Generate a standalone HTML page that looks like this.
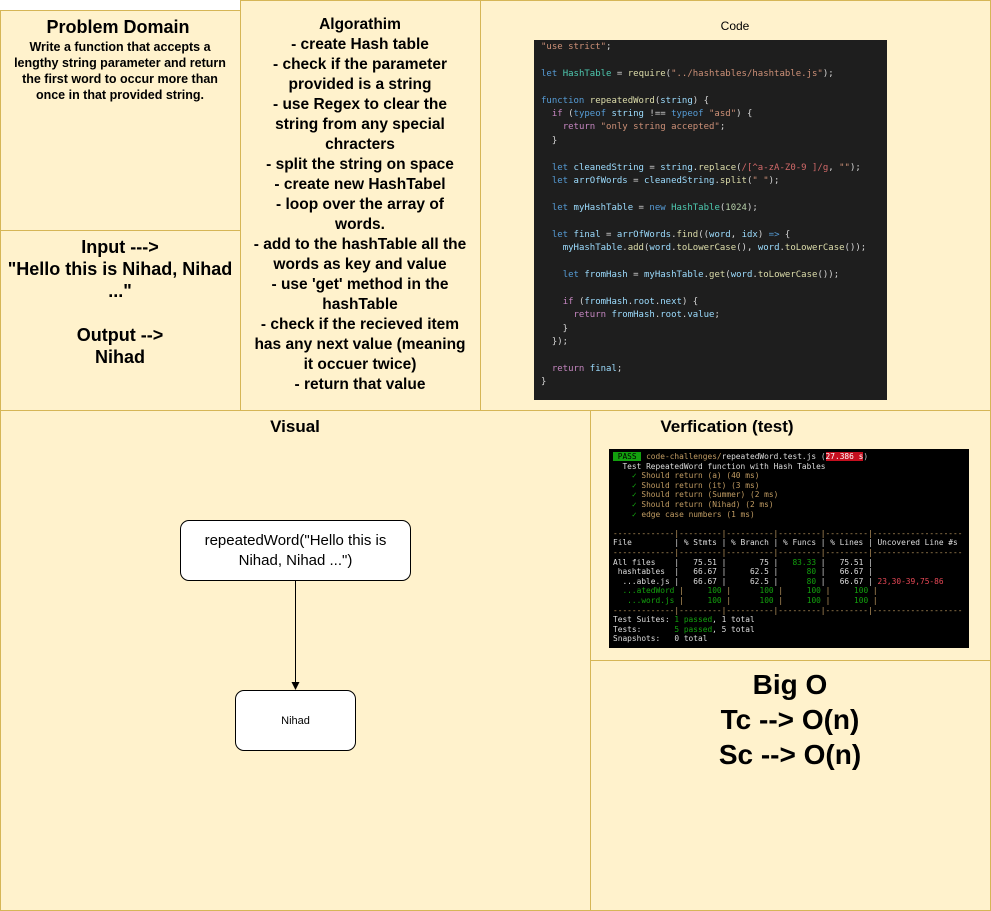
<!DOCTYPE html>
<html><head><meta charset="utf-8"><style>
body{margin:0;width:991px;height:911px;background:#fff;position:relative;font-family:"Liberation Sans",Arial,sans-serif;overflow:hidden}
.b{position:absolute;background:#fff2cc;border:1px solid #d6b656;box-sizing:border-box}
.t{position:absolute;text-align:center;font-weight:bold;color:#000}
.code{position:absolute;left:534px;top:40px;width:353px;height:360px;background:#1e1e1e;color:#d4d4d4;font-family:"DejaVu Sans Mono","Liberation Mono",monospace;font-size:9px;line-height:13.4px;padding:1px 0 0 7px;box-sizing:border-box;white-space:pre;overflow:hidden}
.k{color:#569cd6}.s{color:#ce9178}.f{color:#dcdcaa}.v{color:#9cdcfe}.c{color:#4ec9b0}.p{color:#c586c0}.n{color:#b5cea8}.r{color:#d16969}
.term{position:absolute;left:609px;top:449px;width:360px;height:199px;background:#000;color:#ccc;font-family:"DejaVu Sans Mono","Liberation Mono",monospace;font-size:7.85px;line-height:9.6px;padding:3px 0 0 4px;box-sizing:border-box;white-space:pre;overflow:hidden}
.g{color:#13a10e}.y{color:#c19c63}.w{color:#ddd}.rd{color:#e74856}
.box{position:absolute;background:#fff;border:1px solid #000;border-radius:9px;box-sizing:border-box;display:flex;align-items:center;justify-content:center;text-align:center}
</style></head><body>
<div class="b" style="left:0;top:10px;width:241px;height:221px"></div>
<div class="b" style="left:0;top:230px;width:241px;height:181px"></div>
<div class="b" style="left:240px;top:0;width:241px;height:411px"></div>
<div class="b" style="left:480px;top:0;width:511px;height:411px"></div>
<div class="b" style="left:0;top:410px;width:591px;height:501px"></div>
<div class="b" style="left:590px;top:410px;width:401px;height:251px"></div>
<div class="b" style="left:590px;top:660px;width:401px;height:251px"></div>

<div class="t" style="left:0;top:16px;width:236px;font-size:18px;line-height:22px">Problem Domain</div>
<div class="t" style="left:0;top:39px;width:240px;font-size:12.5px;line-height:16px">Write a function that accepts a<br>lengthy string parameter and return<br>the first word to occur more than<br>once in that provided string.</div>

<div class="t" style="left:0;top:236px;width:240px;font-size:18px;line-height:22px">Input ---&gt;<br>"Hello this is Nihad, Nihad<br>..."<br><br>Output --&gt;<br>Nihad</div>

<div class="t" style="left:240px;top:15px;width:240px;font-size:15.5px;line-height:20px">Algorathim<br>- create Hash table<br>- check if the parameter<br>provided is a string<br>- use Regex to clear the<br>string from any special<br>chracters<br>- split the string on space<br>- create new HashTabel<br>- loop over the array of<br>words.<br>- add to the hashTable all the<br>words as key and value<br>- use 'get' method in the<br>hashTable<br>- check if the recieved item<br>has any next value (meaning<br>it occuer twice)<br>- return that value</div>

<div style="position:absolute;left:480px;top:19px;width:510px;text-align:center;font-size:12px">Code</div>
<div class="code"><span class="s">"use strict"</span>;

<span class="k">let</span> <span class="c">HashTable</span> = <span class="f">require</span>(<span class="s">"../hashtables/hashtable.js"</span>);

<span class="k">function</span> <span class="f">repeatedWord</span>(<span class="v">string</span>) {
  <span class="p">if</span> (<span class="k">typeof</span> <span class="v">string</span> !== <span class="k">typeof</span> <span class="s">"asd"</span>) {
    <span class="p">return</span> <span class="s">"only string accepted"</span>;
  }

  <span class="k">let</span> <span class="v">cleanedString</span> = <span class="v">string</span>.<span class="f">replace</span>(<span class="r">/[^a-zA-Z0-9 ]/g</span>, <span class="s">""</span>);
  <span class="k">let</span> <span class="v">arrOfWords</span> = <span class="v">cleanedString</span>.<span class="f">split</span>(<span class="s">" "</span>);

  <span class="k">let</span> <span class="v">myHashTable</span> = <span class="k">new</span> <span class="c">HashTable</span>(<span class="n">1024</span>);

  <span class="k">let</span> <span class="v">final</span> = <span class="v">arrOfWords</span>.<span class="f">find</span>((<span class="v">word</span>, <span class="v">idx</span>) <span class="k">=&gt;</span> {
    <span class="v">myHashTable</span>.<span class="f">add</span>(<span class="v">word</span>.<span class="f">toLowerCase</span>(), <span class="v">word</span>.<span class="f">toLowerCase</span>());

    <span class="k">let</span> <span class="v">fromHash</span> = <span class="v">myHashTable</span>.<span class="f">get</span>(<span class="v">word</span>.<span class="f">toLowerCase</span>());

    <span class="p">if</span> (<span class="v">fromHash</span>.<span class="v">root</span>.<span class="v">next</span>) {
      <span class="p">return</span> <span class="v">fromHash</span>.<span class="v">root</span>.<span class="v">value</span>;
    }
  });

  <span class="p">return</span> <span class="v">final</span>;
}</div>

<div class="t" style="left:0;top:417px;width:590px;font-size:17px">Visual</div>
<div class="box" style="left:180px;top:520px;width:231px;height:61px;font-size:15px;line-height:20px">repeatedWord("Hello this is<br>Nihad, Nihad ...")</div>
<svg style="position:absolute;left:0;top:0" width="991" height="911"><line x1="295.5" y1="581" x2="295.5" y2="683" stroke="#000"/><path d="M291.5 682 L295.5 690 L299.5 682 Z" fill="#000"/></svg>
<div class="box" style="left:235px;top:690px;width:121px;height:61px;font-size:11px">Nihad</div>

<div class="t" style="left:590px;top:417px;width:274px;font-size:17px">Verfication (test)</div>
<div class="term"><span style="background:#13a10e;color:#000"> PASS </span> <span class="y">code-challenges/</span><span class="w">repeatedWord.test.js</span> (<span style="background:#c50f1f;color:#fff">27.386 s</span>)
  <span class="w">Test RepeatedWord function with Hash Tables</span>
    <span class="g">✓</span> <span class="y">Should return (a) (40 ms)</span>
    <span class="g">✓</span> <span class="y">Should return (it) (3 ms)</span>
    <span class="g">✓</span> <span class="y">Should return (Summer) (2 ms)</span>
    <span class="g">✓</span> <span class="y">Should return (Nihad) (2 ms)</span>
    <span class="g">✓</span> <span class="y">edge case numbers (1 ms)</span>

<span class="y">-------------|---------|----------|---------|---------|-------------------</span>
<span class="w">File         | % Stmts | % Branch | % Funcs | % Lines | Uncovered Line #s</span>
<span class="y">-------------|---------|----------|---------|---------|-------------------</span>
<span class="w">All files    |   75.51 |       75 |   <span class="g">83.33</span> |   75.51 |
 hashtables  |   66.67 |     62.5 |      <span class="g">80</span> |   66.67 |
  ...able.js |   66.67 |     62.5 |      <span class="g">80</span> |   66.67 | <span class="rd">23,30-39,75-86</span></span>
<span class="g">  ...atedWord</span> <span class="y">|</span> <span class="g">    100</span> <span class="y">|</span> <span class="g">     100</span> <span class="y">|</span> <span class="g">    100</span> <span class="y">|</span> <span class="g">    100</span> <span class="y">|</span>
<span class="g">   ...word.js</span> <span class="y">|</span> <span class="g">    100</span> <span class="y">|</span> <span class="g">     100</span> <span class="y">|</span> <span class="g">    100</span> <span class="y">|</span> <span class="g">    100</span> <span class="y">|</span>
<span class="y">-------------|---------|----------|---------|---------|-------------------</span>
<span class="w">Test Suites: <span class="g">1 passed</span>, 1 total
Tests:       <span class="g">5 passed</span>, 5 total
Snapshots:   0 total</span></div>

<div class="t" style="left:590px;top:667px;width:400px;font-size:28px;line-height:35px">Big O<br>Tc --&gt; O(n)<br>Sc --&gt; O(n)</div>
</body></html>
